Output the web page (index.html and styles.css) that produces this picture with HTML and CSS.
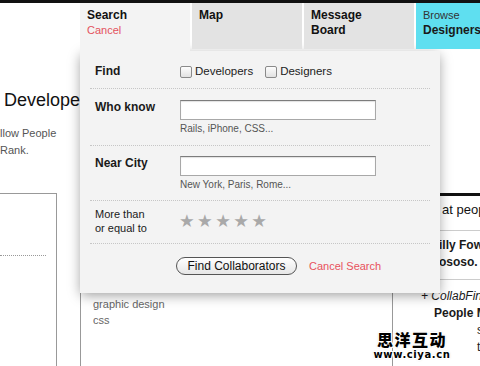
FILE: index.html
```html
<!DOCTYPE html>
<html lang="en">
  <head>
    <meta charset="UTF-8" />
    <meta name="viewport" content="width=device-width, initial-scale=1" />
    <title>CollabFinder - Search</title>
    <link rel="stylesheet" href="styles.css">
  </head>
  <body>
    <header class="topbar">
      <nav class="tabs">
        <a class="tab tab-active" href="#">Search<span class="tab-cancel">Cancel</span></a>
        <a class="tab" href="#">Map</a>
        <a class="tab" href="#">Message<br>Board</a>
        <a class="tab tab-browse" href="#"><span class="tab-small">Browse</span>Designers</a>
      </nav>
    </header>

    <main class="page">
      <section class="col-left">
        <h1>Developers</h1>
        <p class="intro">llow People<br>Rank.</p>
        <div class="left-box"><div class="dots"></div></div>
      </section>

      <section class="col-mid">
        <div class="mid-box">
          <ul class="skills">
            <li>graphic design</li>
            <li>css</li>
          </ul>
        </div>
      </section>

      <aside class="col-right">
        <div class="right-box">
          <div class="say">
            <h3 class="say-title">at people say</h3>
            <p class="quote">illy Fowler<br>ososo.</p>
          </div>
          <p class="collab">+ CollabFinder</p>
          <p class="people">People Map</p>
          <p class="blurb">se<br>th</p>
        </div>
      </aside>
    </main>

    <!-- Search dropdown -->
    <form class="search-panel">
      <div class="row row-find">
        <span class="field-label">Find</span>
        <div class="checks">
          <label class="check"><input type="checkbox" /> Developers</label>
          <label class="check"><input type="checkbox" /> Designers</label>
        </div>
      </div>
      <div class="row">
        <span class="field-label">Who know</span>
        <div>
          <input class="text-field" type="text" />
          <div class="hint">Rails, iPhone, CSS...</div>
        </div>
      </div>
      <div class="row row-city">
        <span class="field-label">Near City</span>
        <div>
          <input class="text-field" type="text" />
          <div class="hint">New York, Paris, Rome...</div>
        </div>
      </div>
      <div class="row row-rank">
        <span class="rank-label">More than<br>or equal to</span>
        <div class="stars">★★★★★</div>
      </div>
      <div class="actions">
        <button class="btn-find" type="button">Find Collaborators</button>
        <a class="cancel-search" href="#">Cancel Search</a>
      </div>
    </form>

    <div class="watermark">
      <div class="wm-cn">思洋互动</div>
      <div class="wm-url">www.ciya.cn</div>
    </div>
  </body>
</html>
```

FILE: styles.css
```css
/* Reset */
* {
  margin: 0;
  padding: 0;
  box-sizing: border-box;
}
html,
body {
  width: 480px;
  height: 366px;
  overflow: hidden;
  background: #fff;
  font-family: "Liberation Sans", Arial, sans-serif;
  color: #1a1a1a;
}
body {
  border-top: 3px solid #111;
  position: relative;
}
a {
  text-decoration: none;
  color: inherit;
}

/* Tabs */
.topbar {
  position: relative;
  z-index: 2;
  height: 48px;
}
.tabs {
  display: flex;
  gap: 2px;
  margin-left: 80px;
}
.tab {
  flex: none;
  width: 110px;
  height: 46px;
  padding: 5px 7px 0;
  background: #e3e3e3;
  font-size: 12px;
  line-height: 15px;
  font-weight: bold;
  color: #111;
}
.tab-active {
  height: 48px;
  background: #f3f3f3;
}
.tab-cancel {
  display: block;
  font-size: 11px;
  font-weight: normal;
  color: #e4525d;
}
.tab-browse {
  background: #5fdff0;
  color: #1a1a1a;
}
.tab-small {
  display: block;
  font-size: 11px;
  font-weight: normal;
  color: #333;
}

/* Page behind the dropdown */
.page {
  display: flex;
  height: 315px;
}
.col-left {
  flex: none;
  width: 80px;
  padding-top: 38px;
  display: flex;
  flex-direction: column;
}
h1 {
  margin-left: 4px;
  font-size: 18px;
  line-height: 22px;
  font-weight: normal;
  white-space: nowrap;
  color: #111;
}
.intro {
  margin-top: 14px;
  font-size: 11px;
  line-height: 17px;
  color: #555;
  white-space: nowrap;
}
.left-box {
  flex: 1;
  width: 57px;
  margin-top: 34px;
  border-top: 1px solid #999;
  border-right: 1px solid #999;
}
.dots {
  width: 46px;
  margin-top: 61px;
  border-top: 1px dotted #999;
}

.col-mid {
  flex: none;
  width: 312px;
  padding-top: 142px;
}
.mid-box {
  height: 100%;
  border-left: 1px solid #999;
  padding: 103px 0 0 12px;
}
.skills {
  list-style: none;
  font-size: 11px;
  line-height: 16px;
  color: #666;
}

.col-right {
  flex: 1;
  padding-top: 142px;
  overflow: hidden;
  white-space: nowrap;
}
.right-box {
  height: 100%;
  border-left: 1px solid #999;
}
.say {
  border-top: 3px solid #111;
}
.say-title {
  padding: 4px 0 10px 49px;
  font-size: 13px;
  line-height: 20px;
  font-weight: normal;
  color: #111;
  border-bottom: 1px solid #ccc;
}
.quote {
  padding: 6px 0 8px 46px;
  font-size: 12px;
  line-height: 17px;
  font-weight: bold;
  border-bottom: 1px solid #ccc;
}
.collab {
  padding: 8px 0 0 28px;
  font-size: 12px;
  line-height: 17px;
  font-style: italic;
}
.people {
  padding-left: 41px;
  font-size: 12px;
  line-height: 17px;
  font-weight: bold;
}
.blurb {
  padding-left: 84px;
  font-size: 12px;
  line-height: 17px;
}

/* Search dropdown */
.search-panel {
  position: absolute;
  z-index: 1;
  top: 48px;
  left: 80px;
  width: 360px;
  height: 242px;
  padding: 0 10px;
  background: #f3f3f3;
  box-shadow: 0 3px 12px -1px rgba(0, 0, 0, 0.4);
}
.row {
  display: grid;
  grid-template-columns: 85px 1fr;
  align-items: start;
  padding: 11px 5px 9px;
  border-bottom: 1px dotted #c6c6c6;
}
.row-find {
  align-items: center;
  padding: 11px 5px 7px;
}
.row-city {
  padding: 10px 5px 8px;
}
.row-rank {
  align-items: center;
  padding: 6px 5px 8px;
}
.field-label {
  font-size: 12px;
  line-height: 15px;
  font-weight: bold;
  color: #1a1a1a;
}
.row-find .field-label {
  line-height: 19px;
}
.checks {
  display: flex;
  gap: 12px;
  font-size: 11.5px;
  line-height: 19px;
  color: #222;
}
.check {
  display: flex;
  align-items: center;
  gap: 3px;
}
.check input {
  appearance: none;
  width: 12px;
  height: 12px;
  border: 1px solid #8a8a8a;
  border-radius: 2px;
  background: linear-gradient(#fdfdfd, #e2e2e2);
}
.text-field {
  display: block;
  width: 196px;
  height: 20px;
  border: 1px solid #a8a8a8;
  border-top-color: #7c7c7c;
  background: #fff;
  box-shadow: inset 0 1px 1px rgba(0, 0, 0, 0.12);
}
.hint {
  margin-top: 2px;
  font-size: 10px;
  line-height: 14px;
  color: #555;
}
.rank-label {
  font-size: 11px;
  line-height: 14px;
  color: #1a1a1a;
}
.stars {
  margin-left: -1px;
  font-family: "DejaVu Sans", sans-serif;
  font-size: 17.5px;
  line-height: 20px;
  letter-spacing: 2.4px;
  color: #a9a9a9;
}
.actions {
  display: flex;
  align-items: center;
  gap: 12px;
  padding: 13px 0 0 86px;
}
.btn-find {
  width: 121px;
  height: 18px;
  border: 1px solid #555;
  border-radius: 9px;
  background: linear-gradient(#fff, #e6e6e6);
  font-family: "Liberation Sans", Arial, sans-serif;
  font-size: 12px;
  color: #111;
}
.cancel-search {
  font-size: 11px;
  color: #e8525c;
}

/* Watermark */
.watermark {
  position: absolute;
  z-index: 3;
  left: 372px;
  top: 326px;
  width: 80px;
  text-align: center;
  color: #000;
  font-weight: bold;
  text-shadow: 1px 0 0 #fff, -1px 0 0 #fff, 0 1px 0 #fff, 0 -1px 0 #fff,
    1px 1px 0 #fff, -1px -1px 0 #fff, 1px -1px 0 #fff, -1px 1px 0 #fff,
    0 0 2px #777;
}
.wm-cn {
  font-family: "Noto Sans CJK SC", sans-serif;
  font-size: 16px;
  line-height: 20px;
  font-weight: 900;
  letter-spacing: 1.5px;
}
.wm-url {
  font-family: "DejaVu Sans", sans-serif;
  font-size: 10px;
  line-height: 12px;
  letter-spacing: 0.6px;
}
```
